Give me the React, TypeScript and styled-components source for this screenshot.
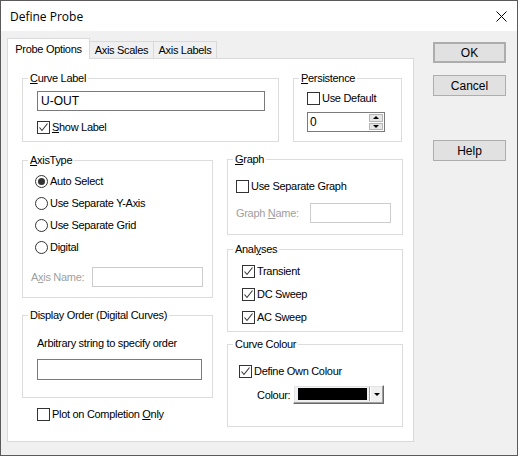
import React from 'react';
import styled, { createGlobalStyle } from 'styled-components';

const GlobalStyle = createGlobalStyle`
  html, body {
    margin: 0;
    padding: 0;
    background: #ffffff;
  }
  * {
    box-sizing: border-box;
  }
`;

const Window = styled.div`
  width: 518px;
  height: 456px;
  border: 1px solid #5a5a5a;
  display: flex;
  flex-direction: column;
  font-family: 'Liberation Sans', Arial, sans-serif;
  font-size: 11px;
  letter-spacing: -0.3px;
  color: #000;
  overflow: hidden;
`;

const TitleBar = styled.div`
  height: 30px;
  flex-shrink: 0;
  background: #ffffff;
  display: flex;
  align-items: center;
  justify-content: space-between;
  padding: 0 10px 0 9px;
`;

const Title = styled.span`
  font-family: 'Segoe UI', 'Open Sans', sans-serif;
  font-size: 12px;
  letter-spacing: 0;
`;

const Body = styled.div`
  flex: 1;
  background: #f0f0f0;
  display: flex;
  padding: 7px 0 0 6px;
`;

const TabArea = styled.div`
  width: 407px;
  display: flex;
  flex-direction: column;
`;

const TabStrip = styled.div`
  height: 20px;
  display: flex;
  align-items: flex-end;
  position: relative;
  z-index: 1;
`;

const Tab = styled.div<{ $active?: boolean; $width: number }>`
  width: ${({ $width }) => $width}px;
  height: ${({ $active }) => ($active ? 21 : 17)}px;
  margin-bottom: ${({ $active }) => ($active ? -1 : 0)}px;
  margin-left: ${({ $active }) => ($active ? 0 : -1)}px;
  background: ${({ $active }) => ($active ? '#ffffff' : '#f0f0f0')};
  border: 1px solid #d9d9d9;
  border-bottom: none;
  display: flex;
  align-items: center;
  justify-content: center;
  padding-bottom: ${({ $active }) => ($active ? 1 : 0)}px;
  &:first-child {
    margin-left: 0;
  }
`;

const Panel = styled.div`
  height: 384px;
  background: #ffffff;
  border: 1px solid #d9d9d9;
  padding: 13px 0 0 14px;
  display: flex;
  flex-direction: column;
`;

const TopRow = styled.div`
  display: flex;
  gap: 14px;
`;

const LowerRow = styled.div`
  display: flex;
  gap: 14px;
  margin-top: 12px;
`;

const Column = styled.div<{ $width: number; $offset?: number }>`
  width: ${({ $width }) => $width}px;
  display: flex;
  flex-direction: column;
  margin-top: ${({ $offset }) => $offset || 0}px;
`;

// legend sits inside the fieldset padding, so pull it back to 5px from the border
const Group = styled.fieldset<{ $width?: number; $height: number; $top: number; $left: number; $gap?: number }>`
  margin: 0;
  min-width: 0;
  width: ${({ $width }) => ($width ? `${$width}px` : '100%')};
  height: ${({ $height }) => $height}px;
  border: 1px solid #dcdcdc;
  padding: ${({ $top, $left }) => `${$top}px 0 0 ${$left}px`};
  display: flex;
  flex-direction: column;
  align-items: flex-start;
  gap: ${({ $gap }) => $gap || 0}px;
  & > legend {
    margin-left: ${({ $left }) => 5 - $left}px;
  }
`;

const GroupTitle = styled.legend`
  padding: 0 2px;
  line-height: 13px;
  height: 13px;
`;

const Spacer = styled.div<{ $h: number; $w?: number }>`
  height: ${({ $h }) => $h}px;
  width: ${({ $w }) => ($w ? `${$w}px` : 'auto')};
  flex-shrink: 0;
`;

const TextBox = styled.div<{ $width: number; $height?: number; $disabled?: boolean }>`
  width: ${({ $width }) => $width}px;
  height: ${({ $height }) => $height || 20}px;
  border: 1px solid ${({ $disabled }) => ($disabled ? '#cccccc' : '#7a7a7a')};
  background: #ffffff;
  display: flex;
  align-items: center;
  padding-left: 3px;
  font-size: 12px;
  letter-spacing: 0;
  flex-shrink: 0;
`;

const OptionRow = styled.label<{ $indent?: number }>`
  display: flex;
  align-items: center;
  gap: 2px;
  height: 13px;
  line-height: 13px;
  margin-left: ${({ $indent }) => $indent || 0}px;
  white-space: nowrap;
`;

const Box = styled.span`
  width: 13px;
  height: 13px;
  border: 1px solid #333333;
  background: #ffffff;
  display: inline-flex;
  align-items: center;
  justify-content: center;
  flex-shrink: 0;
`;

const RadioCircle = styled.span`
  width: 13px;
  height: 13px;
  border: 1px solid #333333;
  border-radius: 50%;
  background: #ffffff;
  display: inline-flex;
  align-items: center;
  justify-content: center;
  flex-shrink: 0;
`;

const RadioDot = styled.span`
  width: 7px;
  height: 7px;
  border-radius: 50%;
  background: #333333;
`;

const RadioList = styled.div`
  display: flex;
  flex-direction: column;
  gap: 9px;
`;

const FieldRow = styled.div`
  display: flex;
  align-items: center;
`;

const FieldLabel = styled.span<{ $width: number; $disabled?: boolean }>`
  width: ${({ $width }) => $width}px;
  color: ${({ $disabled }) => ($disabled ? '#a0a0a0' : '#000000')};
  white-space: nowrap;
  flex-shrink: 0;
`;

const Hint = styled.div`
  line-height: 13px;
  white-space: nowrap;
`;

const SpinBox = styled.div`
  width: 78px;
  height: 20px;
  border: 1px solid #7a7a7a;
  background: #ffffff;
  display: flex;
  align-items: stretch;
`;

const SpinValue = styled.div`
  flex: 1;
  display: flex;
  align-items: center;
  padding-left: 2px;
  font-size: 12px;
  letter-spacing: 0;
`;

const SpinButtons = styled.div`
  width: 15px;
  display: flex;
  flex-direction: column;
  padding: 1px 1px 1px 0;
  gap: 1px;
`;

const SpinHalf = styled.div`
  flex: 1;
  background: #e6e6e6;
  border: 1px solid #b5b5b5;
  display: flex;
  align-items: center;
  justify-content: center;
`;

const Arrow = styled.span<{ $up?: boolean }>`
  width: 0;
  height: 0;
  border-left: 3px solid transparent;
  border-right: 3px solid transparent;
  ${({ $up }) => ($up ? 'border-bottom: 3px solid #000;' : 'border-top: 3px solid #000;')}
`;

const ColourPicker = styled.div`
  width: 91px;
  height: 19px;
  background: #f0f0f0;
  border-top: 1px solid #ffffff;
  border-left: 1px solid #ffffff;
  border-right: 1px solid #696969;
  border-bottom: 1px solid #696969;
  box-shadow: inset -1px -1px 0 #a0a0a0, inset 1px 1px 0 #e3e3e3;
  display: flex;
  align-items: center;
  padding: 2px 3px 3px 4px;
`;

const Swatch = styled.div<{ $colour: string }>`
  width: 71px;
  height: 12px;
  background: ${({ $colour }) => $colour};
`;

const Separator = styled.div`
  width: 2px;
  height: 14px;
  margin-left: 2px;
  border-left: 1px solid #a0a0a0;
  border-right: 1px solid #ffffff;
`;

const DropArrow = styled.span`
  margin-left: 3px;
  width: 0;
  height: 0;
  border-left: 3px solid transparent;
  border-right: 3px solid transparent;
  border-top: 3px solid #000;
`;

const ButtonColumn = styled.div`
  margin-left: 19px;
  padding-top: 4px;
  display: flex;
  flex-direction: column;
`;

const Button = styled.button<{ $default?: boolean; $gap?: number }>`
  width: 73px;
  height: 21px;
  margin: ${({ $gap }) => $gap || 0}px 0 0 0;
  padding: 0;
  background: #e1e1e1;
  border: ${({ $default }) => ($default ? 2 : 1)}px solid #adadad;
  font-family: 'Liberation Sans', Arial, sans-serif;
  font-size: 12px;
  color: #000;
`;

const Check = () => (
  <svg width="11" height="11" viewBox="0 0 11 11">
    <path d="M1.5 5.5 L4 8.5 L9.5 1.5" fill="none" stroke="#333" strokeWidth="1.1" />
  </svg>
);

const CheckBox = ({ checked, children, indent }: { checked?: boolean; children: React.ReactNode; indent?: number }) => (
  <OptionRow $indent={indent}>
    <Box>{checked && <Check />}</Box>
    <span>{children}</span>
  </OptionRow>
);

const Radio = ({ checked, children }: { checked?: boolean; children: React.ReactNode }) => (
  <OptionRow $indent={4}>
    <RadioCircle>{checked && <RadioDot />}</RadioCircle>
    <span>{children}</span>
  </OptionRow>
);

const CloseIcon = () => (
  <svg width="11" height="11" viewBox="0 0 11 11">
    <path d="M0.5 0.5 L10.5 10.5 M10.5 0.5 L0.5 10.5" stroke="#000" strokeWidth="1" />
  </svg>
);

export default function App() {
  return (
    <>
      <GlobalStyle />
      <Window>
        <TitleBar>
          <Title>Define Probe</Title>
          <CloseIcon />
        </TitleBar>
        <Body>
          <TabArea>
            <TabStrip>
              <Tab $active $width={83}>Probe Options</Tab>
              <Tab $width={65}>Axis Scales</Tab>
              <Tab $width={64}>Axis Labels</Tab>
            </TabStrip>
            <Panel>
              <TopRow>
                <Group $width={257} $height={70} $top={6} $left={14}>
                  <GroupTitle><u>C</u>urve Label</GroupTitle>
                  <TextBox $width={228}>U-OUT</TextBox>
                  <Spacer $h={10} />
                  <CheckBox checked><u>S</u>how Label</CheckBox>
                </Group>
                <Group $width={109} $height={70} $top={7} $left={13}>
                  <GroupTitle><u>P</u>ersistence</GroupTitle>
                  <CheckBox>Use Default</CheckBox>
                  <Spacer $h={7} />
                  <SpinBox>
                    <SpinValue>0</SpinValue>
                    <SpinButtons>
                      <SpinHalf><Arrow $up /></SpinHalf>
                      <SpinHalf><Arrow /></SpinHalf>
                    </SpinButtons>
                  </SpinBox>
                </Group>
              </TopRow>
              <LowerRow>
                <Column $width={191}>
                  <Group $height={144} $top={8} $left={8}>
                    <GroupTitle><u>A</u>xisType</GroupTitle>
                    <RadioList>
                      <Radio checked>Auto Select</Radio>
                      <Radio>Use Separate Y-Axis</Radio>
                      <Radio>Use Separate Grid</Radio>
                      <Radio>Digital</Radio>
                    </RadioList>
                    <Spacer $h={13} />
                    <FieldRow>
                      <FieldLabel $width={61} $disabled>A<u>x</u>is Name:</FieldLabel>
                      <TextBox $width={111} $disabled />
                    </FieldRow>
                  </Group>
                  <Spacer $h={11} />
                  <Group $height={89} $top={15} $left={14}>
                    <GroupTitle>Display Order (Digital Curves)</GroupTitle>
                    <Hint>Arbitrary string to specify order</Hint>
                    <Spacer $h={9} />
                    <TextBox $width={165} $height={21} />
                  </Group>
                  <Spacer $h={10} />
                  <CheckBox indent={15}>Plot on Completion <u>O</u>nly</CheckBox>
                </Column>
                <Column $width={176} $offset={-1}>
                  <Group $height={82} $top={14} $left={8}>
                    <GroupTitle><u>G</u>raph</GroupTitle>
                    <CheckBox>Use Separate Graph</CheckBox>
                    <Spacer $h={10} />
                    <FieldRow>
                      <FieldLabel $width={74} $disabled>Graph <u>N</u>ame:</FieldLabel>
                      <TextBox $width={81} $disabled />
                    </FieldRow>
                  </Group>
                  <Spacer $h={8} />
                  <Group $height={89} $top={9} $left={14} $gap={10}>
                    <GroupTitle>Anal<u>y</u>ses</GroupTitle>
                    <CheckBox checked>Transient</CheckBox>
                    <CheckBox checked>DC Sweep</CheckBox>
                    <CheckBox checked>AC Sweep</CheckBox>
                  </Group>
                  <Spacer $h={6} />
                  <Group $height={89} $top={14} $left={11}>
                    <GroupTitle>Curve Colour</GroupTitle>
                    <CheckBox checked>Define Own Colour</CheckBox>
                    <Spacer $h={7} />
                    <FieldRow>
                      <Spacer $h={1} $w={18} />
                      <FieldLabel $width={36}>Colour:</FieldLabel>
                      <ColourPicker>
                        <Swatch $colour="#000000" />
                        <Separator />
                        <DropArrow />
                      </ColourPicker>
                    </FieldRow>
                  </Group>
                </Column>
              </LowerRow>
            </Panel>
          </TabArea>
          <ButtonColumn>
            <Button $default>OK</Button>
            <Button $gap={12}>Cancel</Button>
            <Button $gap={44}>Help</Button>
          </ButtonColumn>
        </Body>
      </Window>
    </>
  );
}
